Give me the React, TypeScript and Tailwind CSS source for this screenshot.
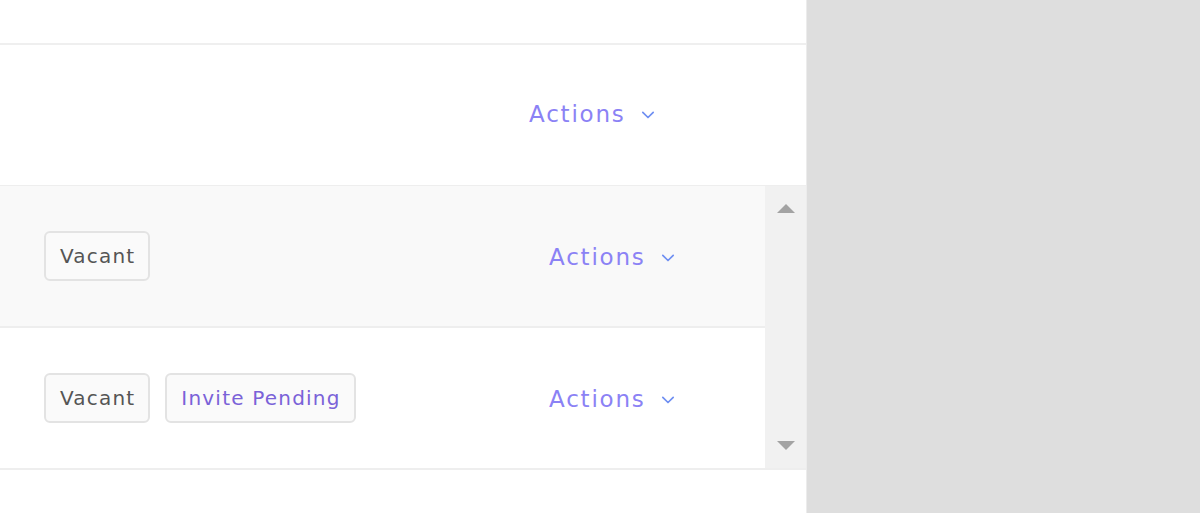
import React from "react";

const font = { fontFamily: '"DejaVu Sans", sans-serif' };

function Chevron() {
  return (
    <svg width="14" height="10" viewBox="0 0 14 10" className="ml-[15px] mt-[1px]">
      <path d="M1.8 2.3 L7 7.5 L12.2 2.3" fill="none" stroke="#6f8ff2" strokeWidth="1.7" strokeLinecap="round" strokeLinejoin="round" />
    </svg>
  );
}

function Actions({ top = false }: { top?: boolean }) {
  return (
    <div className={`flex items-center ${top ? "pb-[2px]" : "pt-[2px]"}`}>
      <span className="text-[23px] leading-none tracking-[1.8px] text-[#8b82f5]" style={font}>Actions</span>
      <Chevron />
    </div>
  );
}

function Badge({ children, purple }: { children: React.ReactNode; purple?: boolean }) {
  return (
    <div
      className={`flex h-[50px] items-center rounded-[6px] border-2 border-[#e3e3e3] bg-[#fafafa] pl-[14px] pr-[13px] text-[20px] tracking-[1.2px] ${purple ? "text-[#7a62d8]" : "text-[#555555]"}`}
      style={font}
    >
      {children}
    </div>
  );
}

export default function App() {
  return (
    <div className="flex h-[513px] w-[1200px] overflow-hidden" style={font}>
      <div className="flex w-[807px] flex-col border-r border-[#ececec] bg-white">
        <div className="h-[45px] border-b-2 border-[#efefef]" />
        <div className="flex h-[141px] items-center border-b border-[#eeeeee] pl-[529px]">
          <Actions top />
        </div>
        <div className="flex border-b-2 border-[#eeeeee]">
          <div className="flex w-[765px] flex-col">
            <div className="flex h-[142px] items-center border-b-2 border-[#eeeeee] bg-[#f9f9f9] pl-[44px]">
              <div className="w-[505px]">
                <div className="flex gap-[15px]">
                  <Badge>Vacant</Badge>
                </div>
              </div>
              <Actions />
            </div>
            <div className="flex h-[140px] items-center bg-white pl-[44px]">
              <div className="w-[505px]">
                <div className="flex gap-[15px]">
                  <Badge>Vacant</Badge>
                  <Badge purple>Invite Pending</Badge>
                </div>
              </div>
              <Actions />
            </div>
          </div>
          <div className="flex w-[41px] flex-col items-center justify-between bg-[#f1f1f1] pb-[18px] pt-[18px]">
            <svg width="18" height="9" viewBox="0 0 18 9">
              <path d="M0 9 L9 0 L18 9 Z" fill="#a3a3a3" />
            </svg>
            <svg width="18" height="9" viewBox="0 0 18 9">
              <path d="M0 0 L18 0 L9 9 Z" fill="#a3a3a3" />
            </svg>
          </div>
        </div>
        <div className="flex-1" />
      </div>
      <div className="flex-1 bg-[#dedede]" />
    </div>
  );
}
